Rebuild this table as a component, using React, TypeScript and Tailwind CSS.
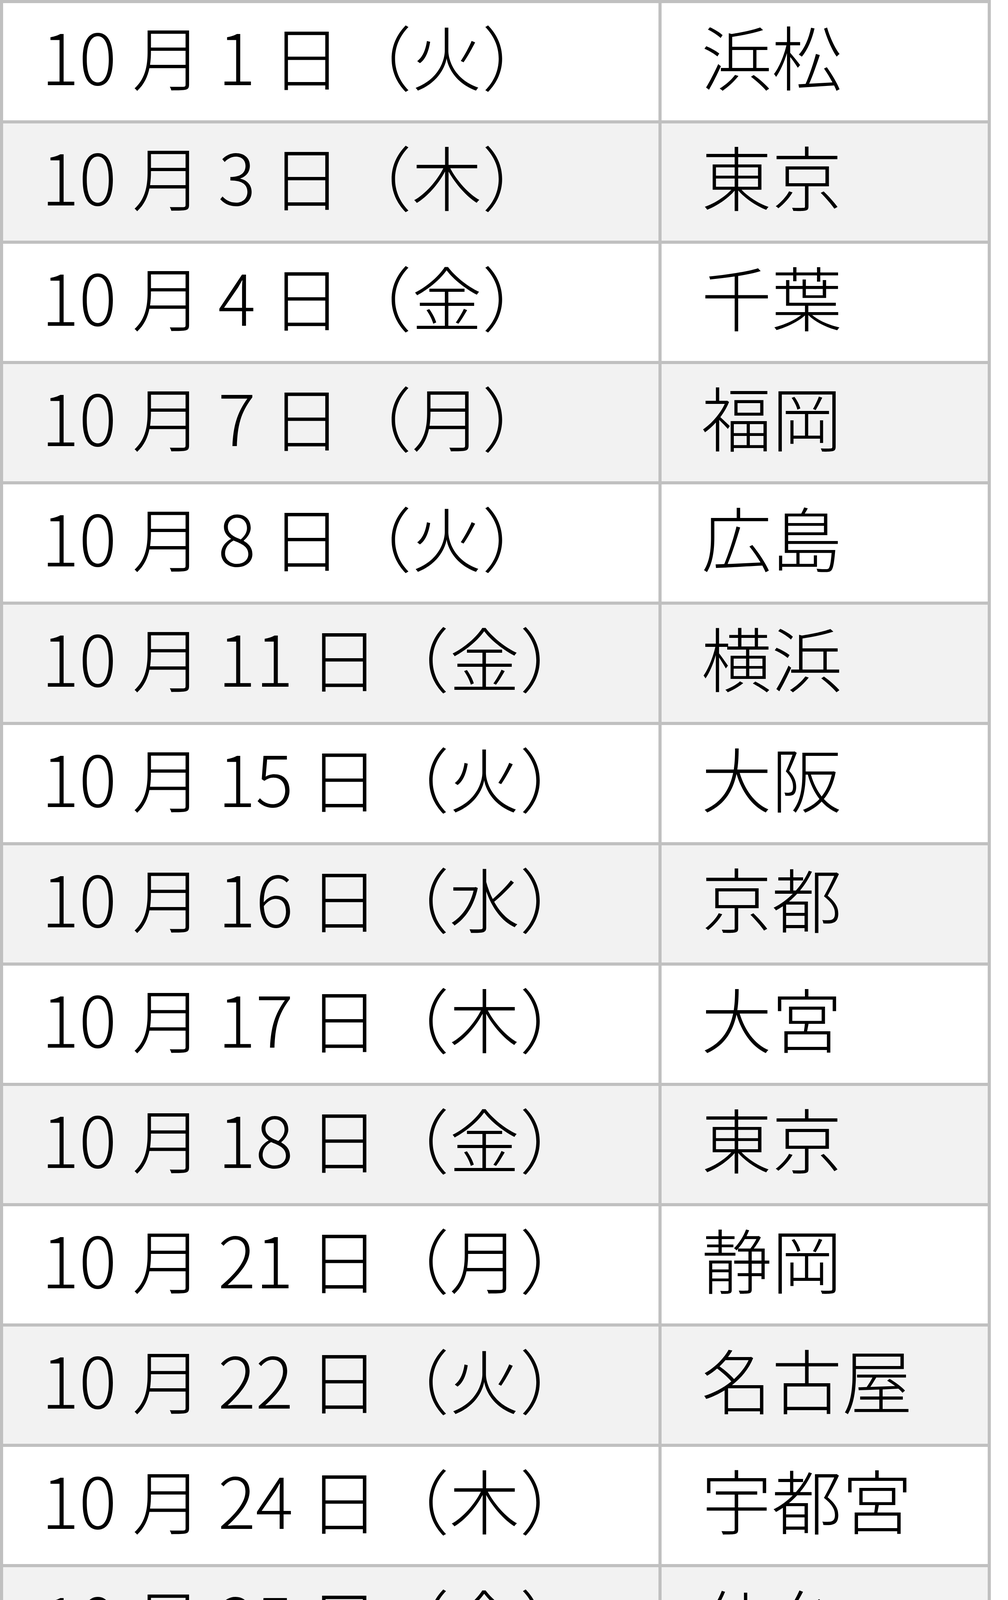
import React from "react";

const rows: [string, string][] = [
  ["10 月 1 日（火）", "浜松"],
  ["10 月 3 日（木）", "東京"],
  ["10 月 4 日（金）", "千葉"],
  ["10 月 7 日（月）", "福岡"],
  ["10 月 8 日（火）", "広島"],
  ["10 月 11 日（金）", "横浜"],
  ["10 月 15 日（火）", "大阪"],
  ["10 月 16 日（水）", "京都"],
  ["10 月 17 日（木）", "大宮"],
  ["10 月 18 日（金）", "東京"],
  ["10 月 21 日（月）", "静岡"],
  ["10 月 22 日（火）", "名古屋"],
  ["10 月 24 日（木）", "宇都宮"],
  ["10 月 25 日（金）", "仙台"],
  ["10 月 28 日（月）", "札幌"],
  ["10 月 29 日（火）", "東京"],
];

export default function App() {
  return (
    <div className="bg-white w-[2581px]">
      <div
        className="grid grid-cols-[1678px_835px] gap-[8px] p-[8px] bg-[#c0c0c0] w-[2537px] text-black text-[180px] leading-none font-light"
        style={{ fontFamily: '"Noto Sans CJK JP", "Noto Sans", sans-serif' }}
      >
        {rows.map(([d, c], i) => (
          <React.Fragment key={i}>
            <div
              className={`h-[300px] flex items-center pl-[98px] pb-[36px] whitespace-pre ${
                i % 2 === 0 ? "bg-white" : "bg-[#f2f2f2]"
              }`}
            >
              {d}
            </div>
            <div
              className={`h-[300px] flex items-center pl-[102px] pb-[36px] whitespace-pre ${
                i % 2 === 0 ? "bg-white" : "bg-[#f2f2f2]"
              }`}
            >
              {c}
            </div>
          </React.Fragment>
        ))}
      </div>
    </div>
  );
}
